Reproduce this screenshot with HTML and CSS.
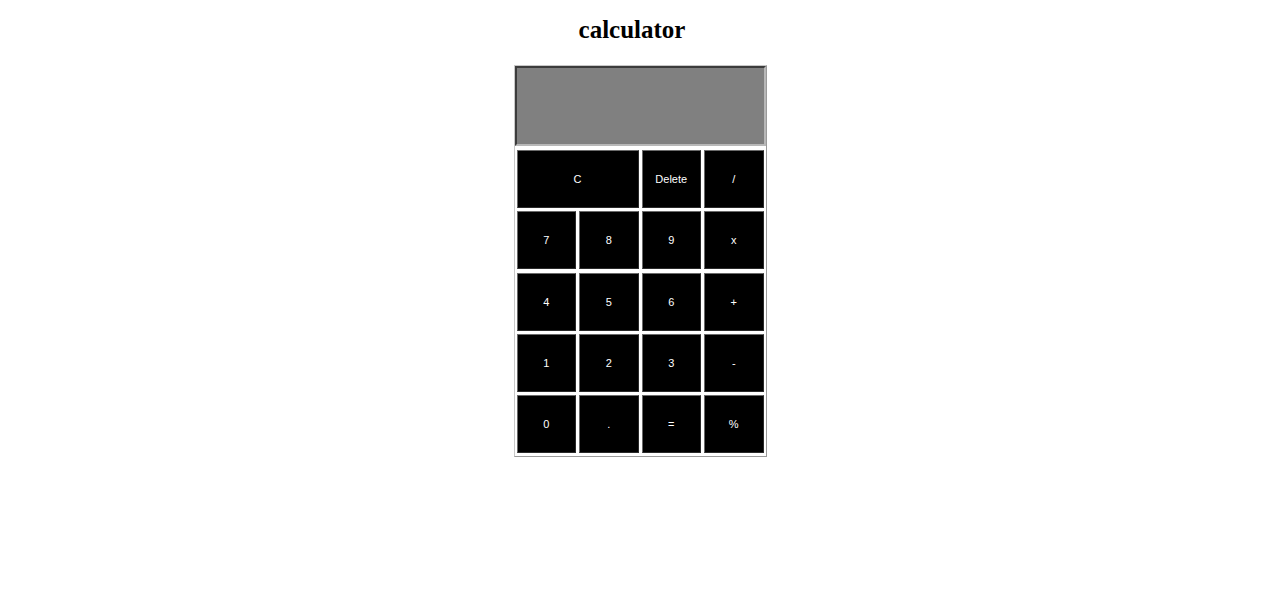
FILE: index.html
```html
<!DOCTYPE html>
<html>
<head>
<meta charset="utf-8">
<link rel="stylesheet" href="styles.css">
</head>
<body>
<h1 class="title">calculator</h1>
<div class="calc">
  <div class="display"></div>
  <div class="keys">
    <button class="key wide">C</button>
    <button class="key">Delete</button>
    <button class="key">/</button>
    <button class="key">7</button>
    <button class="key">8</button>
    <button class="key">9</button>
    <button class="key">x</button>
    <button class="key">4</button>
    <button class="key">5</button>
    <button class="key">6</button>
    <button class="key">+</button>
    <button class="key">1</button>
    <button class="key">2</button>
    <button class="key">3</button>
    <button class="key">-</button>
    <button class="key">0</button>
    <button class="key">.</button>
    <button class="key">=</button>
    <button class="key">%</button>
  </div>
</div>
</body>
</html>
```
FILE: styles.css
```css
html, body {
  margin: 0;
  padding: 0;
  background: #ffffff;
}
.title {
  margin: 16px 0 0;
  padding-right: 16px;
  font-family: "Liberation Serif", "Times New Roman", serif;
  font-weight: bold;
  font-size: 25px;
  line-height: 28px;
  text-align: center;
  color: #000;
}
.calc {
  width: 253px;
  margin: 21px auto 0;
  box-sizing: border-box;
  border: 1px solid #9a9a9a;
  border-top-color: #c8c8c8;
  border-left-color: #c8c8c8;
  background: #fff;
}
.display {
  height: 80px;
  box-sizing: border-box;
  background: #808080;
  border: 2px solid;
  border-color: #3c3c3c #b8b8b8 #b8b8b8 #3c3c3c;
}
.keys {
  display: grid;
  grid-template-columns: repeat(4, 1fr);
  grid-auto-rows: 58px;
  gap: 3.25px 3px;
  padding: 4px 2px 3px;
}
.key {
  margin: 0;
  padding: 0;
  background: #000;
  color: #fff;
  border: 1px solid;
  border-color: #6a6a6a #2a2a2a #2a2a2a #6a6a6a;
  font-family: "Liberation Sans", Arial, sans-serif;
  font-size: 11px;
  cursor: pointer;
}
.wide {
  grid-column: span 2;
}
```
